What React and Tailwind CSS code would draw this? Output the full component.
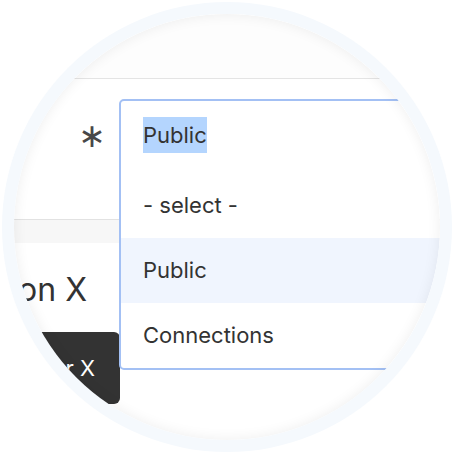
import React from 'react';

const options = ['- select -', 'Public', 'Connections'];

const App = () => {
  return (
    <div className="w-[454px] h-[454px] bg-white flex items-center justify-center font-['Inter',sans-serif] text-[#333333]">
      <div className="w-[450px] h-[450px] rounded-full bg-[#f5f9fd] flex items-center justify-center">
        <div className="relative w-[426px] h-[426px] rounded-full overflow-hidden bg-white">
          {/* form rows behind the open select */}
          <div className="h-[65px] border-b border-[#e4e4e4] bg-[#fdfdfd]"></div>
          <div className="h-[141px] border-b border-[#e2e2e2] flex">
            <div className="w-[106px] flex justify-end items-start pt-[36px] pr-[14px]">
              <span className="font-['DejaVu_Sans',sans-serif] text-[33px] leading-[42px] text-[#484848]">∗</span>
            </div>
          </div>
          <div className="h-[23px] bg-[#f7f7f7]"></div>
          <div className="w-[106px] flex flex-col items-end">
            <div className="mt-[27px] pr-[33px] text-[32px] leading-[40px] whitespace-nowrap">Option X</div>
            <div className="mt-[22px] flex justify-end w-[106px]">
              <button className="shrink-0 w-[180px] h-[72px] rounded-[6px] bg-[#333333] text-white text-[22px] flex items-center justify-end pr-[25px] whitespace-nowrap">
                Filter X
              </button>
            </div>
          </div>

          {/* open dropdown */}
          <div className="absolute left-[105px] top-[85px] w-[420px] border-2 border-[#a3c0f4] rounded-[5px] bg-white text-[22px]">
            <div className="h-[72px] pl-[22px] pt-[16px]">
              <span className="bg-[#b4d5fe] leading-[36px] inline-block">Public</span>
            </div>
            {options.map((opt) => (
              <div
                key={opt}
                className={`h-[65px] pl-[22px] flex items-center ${opt === 'Public' ? 'bg-[#f0f5fe]' : ''}`}
              >
                {opt}
              </div>
            ))}
          </div>

          <div className="pointer-events-none absolute inset-0 rounded-full shadow-[inset_0_0_14px_rgba(0,0,0,0.07)]"></div>
        </div>
      </div>
    </div>
  );
};

export default App;
